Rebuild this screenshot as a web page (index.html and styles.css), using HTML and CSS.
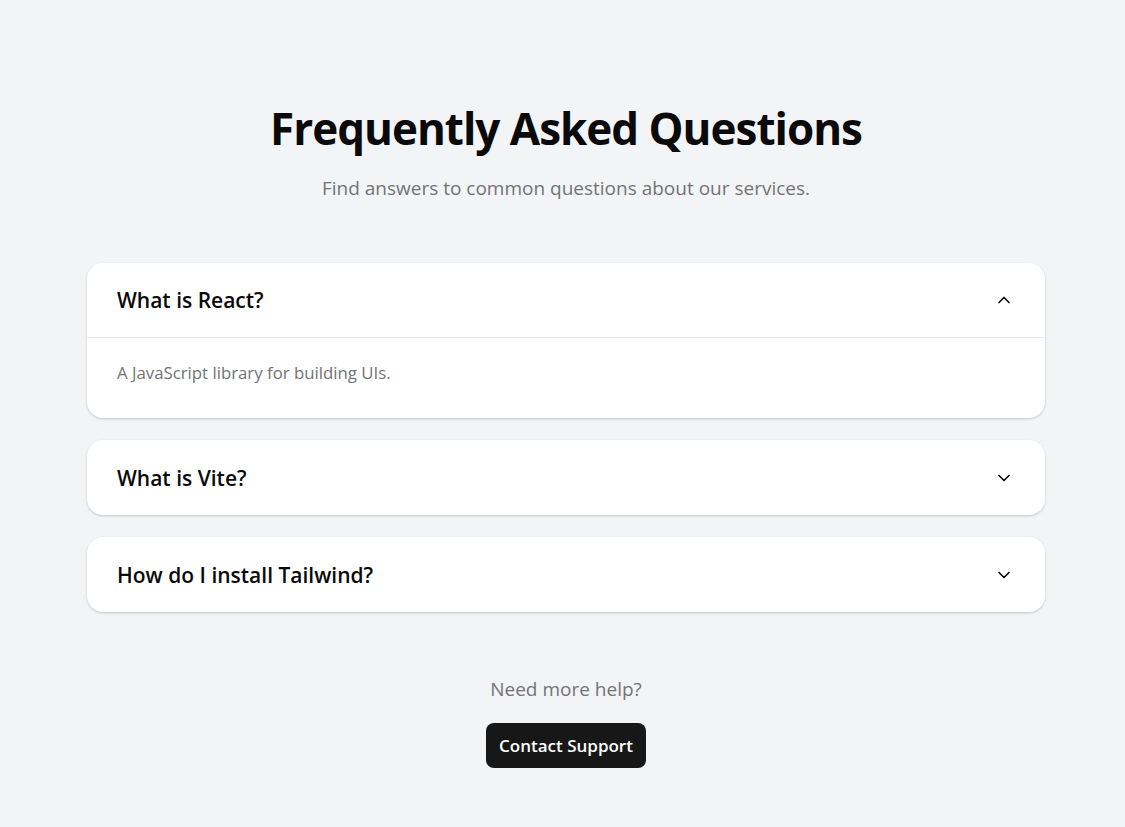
FILE: index.html
```html
<!DOCTYPE html>
<html lang="en">
<head>
<meta charset="utf-8">
<title>FAQ</title>
<link rel="stylesheet" href="styles.css">
</head>
<body>
<main class="page">
  <header class="intro">
    <h1 class="title">Frequently Asked Questions</h1>
    <p class="subtitle">Find answers to common questions about our services.</p>
  </header>
  <section class="faq-list">
    <div class="faq-item open">
      <div class="faq-head">
        <span class="faq-q">What is React?</span>
        <svg class="chev" width="20" height="20" viewBox="0 0 24 24" fill="none" stroke="currentColor" stroke-width="2" stroke-linecap="round" stroke-linejoin="round"><path d="m18 15-6-6-6 6"/></svg>
      </div>
      <div class="faq-body">A JavaScript library for building UIs.</div>
    </div>
    <div class="faq-item">
      <div class="faq-head">
        <span class="faq-q">What is Vite?</span>
        <svg class="chev" width="20" height="20" viewBox="0 0 24 24" fill="none" stroke="currentColor" stroke-width="2" stroke-linecap="round" stroke-linejoin="round"><path d="m6 9 6 6 6-6"/></svg>
      </div>
    </div>
    <div class="faq-item">
      <div class="faq-head">
        <span class="faq-q">How do I install Tailwind?</span>
        <svg class="chev" width="20" height="20" viewBox="0 0 24 24" fill="none" stroke="currentColor" stroke-width="2" stroke-linecap="round" stroke-linejoin="round"><path d="m6 9 6 6 6-6"/></svg>
      </div>
    </div>
  </section>
  <footer class="help">
    <p class="help-text">Need more help?</p>
    <button class="btn">Contact Support</button>
  </footer>
</main>
</body>
</html>
```
FILE: styles.css
```css
* { box-sizing: border-box; }
html, body { margin: 0; padding: 0; }
body {
  background: #f3f4f6;
  font-family: "Open Sans", "Noto Sans", sans-serif;
  color: #0a0a0a;
}
.page {
  padding: 96px 80px 59px 87px;
}
.intro { text-align: center; }
.title {
  margin: 0;
  font-size: 44px;
  font-weight: 700;
  line-height: 64px;
  letter-spacing: -1px;
}
.subtitle {
  margin: 14px 0 0;
  font-size: 19px;
  line-height: 28px;
  color: #737373;
}
.faq-list {
  margin-top: 61px;
  display: flex;
  flex-direction: column;
  gap: 22px;
}
.faq-item {
  background: #fff;
  border-radius: 16px;
  box-shadow: 0 1px 3px rgba(0,0,0,0.12), 0 1px 2px rgba(0,0,0,0.08);
  overflow: hidden;
}
.faq-head {
  height: 75px;
  display: flex;
  align-items: center;
  justify-content: space-between;
  padding: 0 31px 0 30px;
}
.faq-q {
  font-size: 21px;
  font-weight: 600;
  color: #0a0a0a;
}
.chev { color: #0a0a0a; display: block; }
.open .faq-head { border-bottom: 1px solid #e8e8e8; }
.faq-body {
  padding: 23px 30px 33px;
  font-size: 16.8px;
  line-height: 24px;
  color: #737373;
}
.help {
  margin-top: 63px;
  display: flex;
  flex-direction: column;
  align-items: center;
}
.help-text {
  margin: 0;
  font-size: 19px;
  line-height: 28px;
  color: #737373;
}
.btn {
  margin-top: 20px;
  width: 160px;
  height: 45px;
  border: 0;
  border-radius: 8px;
  background: #171717;
  color: #fff;
  font-family: inherit;
  font-size: 17px;
  font-weight: 600;
}
```
